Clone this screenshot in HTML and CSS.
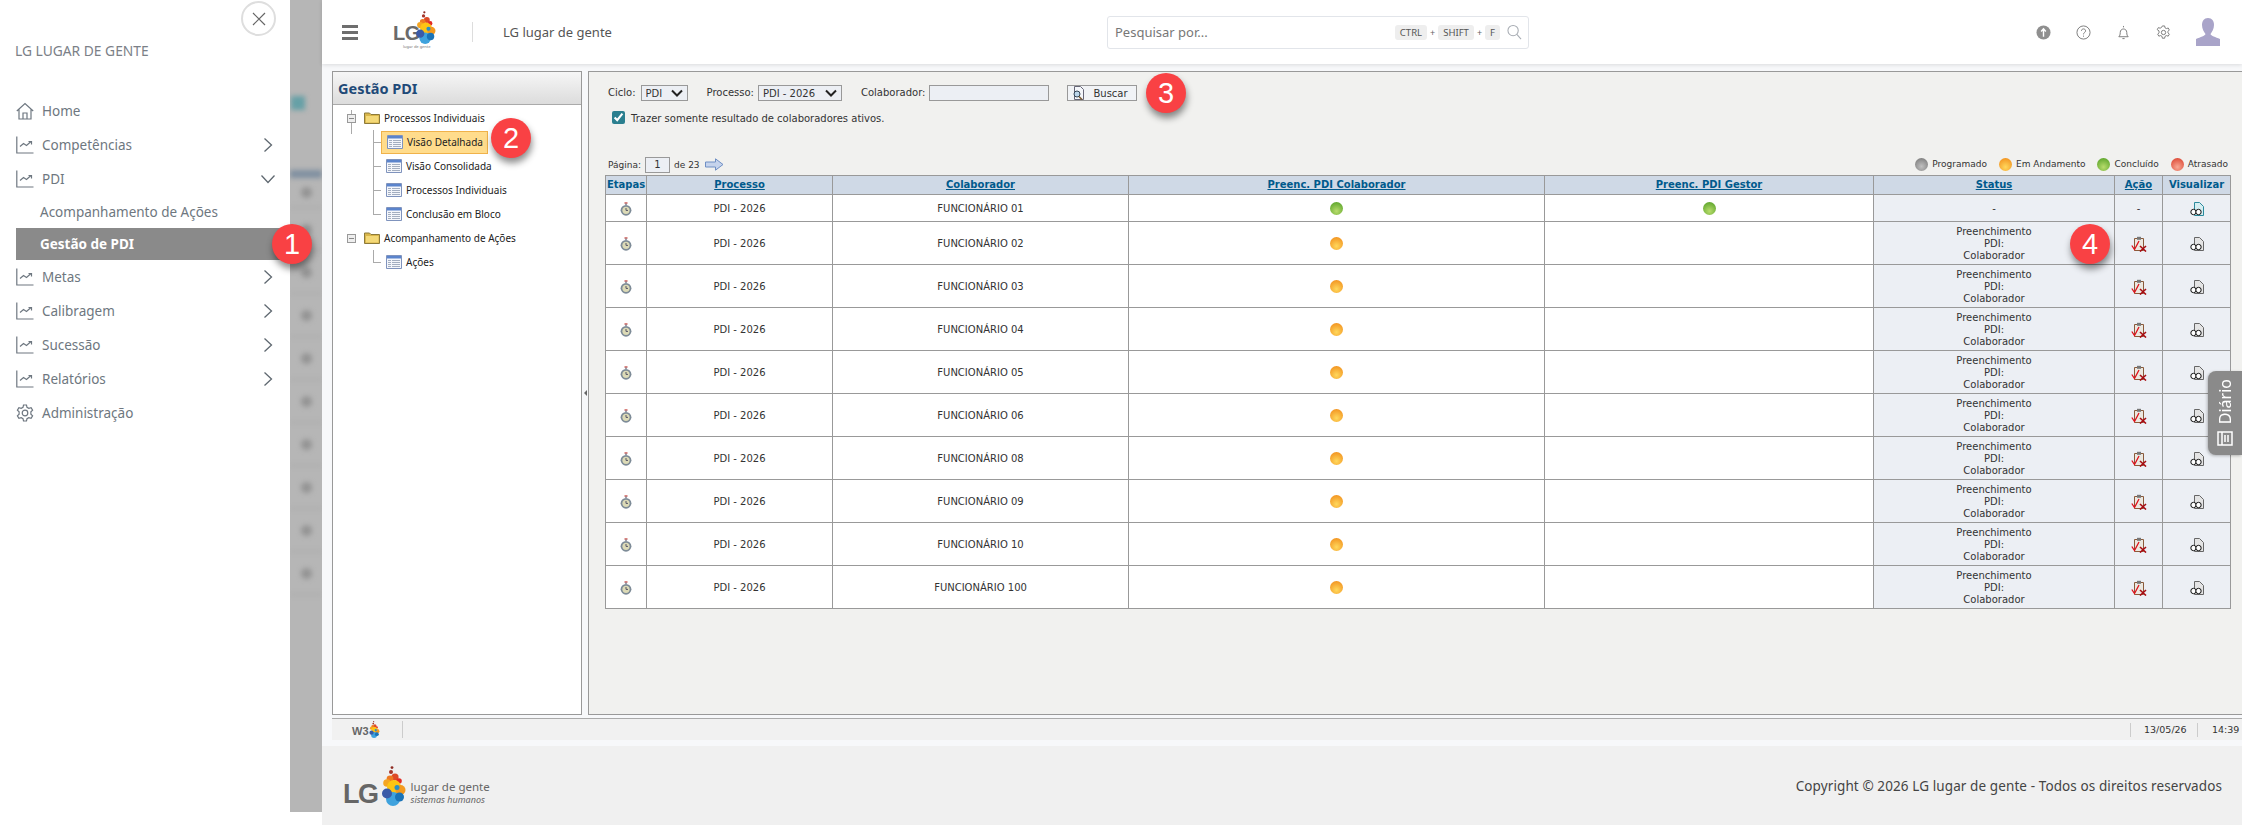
FILE: index.html
```html
<!DOCTYPE html>
<html lang="pt-BR">
<head>
  <meta charset="UTF-8">
  <title>LG lugar de gente - Gestão PDI</title>
  <link rel="stylesheet" href="styles.css">
</head>
<body>
  <!-- icones usados mais de uma vez -->
  <svg class="sprites" width="0" height="0">
    <symbol id="i-blob" viewBox="0 0 24 40">
      <circle cx="10" cy="1.6" r="1.4" fill="#8e2b22"/><circle cx="9" cy="6" r="2" fill="#a5352a"/>
      <circle cx="13" cy="11" r="3.6" fill="#dd4a28"/><circle cx="8" cy="13" r="3.4" fill="#ee7a22"/>
      <circle cx="17" cy="15" r="2.8" fill="#e22b25"/><circle cx="5" cy="17" r="3.8" fill="#f5a623"/>
      <circle cx="12" cy="21" r="7" fill="#fdc413"/><circle cx="18.500" cy="24" r="5" fill="#f39a1f"/>
      <circle cx="11" cy="33" r="7" fill="#3fa2dd"/><circle cx="5" cy="27.500" r="5" fill="#3b5ba8"/>
      <circle cx="17.500" cy="31" r="4.500" fill="#1a74b8"/><circle cx="15" cy="21.500" r="2.500" fill="#2a8fc4"/>
    </symbol>
    <symbol id="i-chart" viewBox="0 0 18 18">
      <path d="M.8 .5V17H17.500M4 10.500l3.500-3 3 2 4.500-4M12.500 5.500H15.500V8.500" fill="none" stroke="#6e7780" stroke-width="1.200"/>
    </symbol>
    <symbol id="i-next" viewBox="0 0 10 16">
      <path d="M1.500 1.500 8.500 8l-7 6.500" fill="none" stroke="#5f6870" stroke-width="1.300"/>
    </symbol>
    <symbol id="i-grid" viewBox="0 0 16 14">
      <path d="M.5 .5h15v13H.5z" fill="#f4f6fb" stroke="#7f93bd"/>
      <path d="M1 1h14v2.500H1z" fill="#5b84cc"/>
      <path d="M6 5.500h8M6 7.500h8M6 9.500h8M6 11.500h8M2 5.500h3M2 7.500h3M2 9.500h3M2 11.500h3" stroke="#a3aec0"/>
    </symbol>
    <symbol id="i-folder" viewBox="0 0 16 12">
      <path d="M.5 11.500V1h5l1.500 1.500h8.500v9z" fill="#d9b64a" stroke="#8c7a3a"/>
      <path d="M2 10.500V4h12.500v6.500z" fill="#f4d978"/>
    </symbol>
    <symbol id="i-clock" viewBox="0 0 12 14">
      <path d="M4.500 .3h3v1.400h-3z" fill="#c9504a"/>
      <path d="M5.300 1.500h1.400v1.500H5.300z" fill="#778"/>
      <circle cx="6" cy="8.300" r="5.400" fill="#7d8b97"/><circle cx="6" cy="8.300" r="3.600" fill="#dcdab6"/>
      <path d="M6 6v2.400h2" fill="none" stroke="#556" stroke-width="1"/>
    </symbol>
    <symbol id="i-view" viewBox="0 0 14 14">
      <path d="M4.500 .5h5l4 4v9h-9z" fill="#e4e4e4" stroke="#666"/>
      <circle cx="3.500" cy="10" r="2.700" fill="#fff" stroke="#111"/><circle cx="8.500" cy="10" r="2.700" fill="#fff" stroke="#111"/>
    </symbol>
    <symbol id="i-view-on" viewBox="0 0 14 14">
      <path d="M4.500 .5h5l4 4v9h-9z" fill="#d6eef2" stroke="#2b8a9c"/>
      <circle cx="3.500" cy="10" r="2.700" fill="#fff" stroke="#111"/><circle cx="8.500" cy="10" r="2.700" fill="#fff" stroke="#111"/>
    </symbol>
    <symbol id="i-task" viewBox="0 0 16 16">
      <path d="M3.500 2.500h9v12h-9z" fill="#ece8e0" stroke="#8a5a3a"/>
      <path d="M6 .8h4v3H6z" fill="#777"/>
      <path d="M.8 9.500 3.500 13.500 8 5" fill="none" stroke="#e0101a" stroke-width="1.300"/>
      <path d="M9 10l6 5.500M15 10l-6 5.500" stroke="#a80d12" stroke-width="1.600"/>
    </symbol>
  </svg>

  <div class="app">
    <aside class="sidebar">
      <div class="sidebar-top">
        <button class="close-btn">
          <svg width="14" height="14" viewBox="0 0 14 14"><path d="M1 1l12 12M13 1 1 13" stroke="#666" stroke-width="1.200"/></svg>
        </button>
        <div class="brand-name">LG LUGAR DE GENTE</div>
      </div>
      <nav class="nav">
        <a class="nav-item">
          <svg class="nav-icon" viewBox="0 0 18 18"><path d="M.8 9 9 1.500 17.200 9M3 7.500V17h12V7.500M7 17v-6h4v6" fill="none" stroke="#6e7780" stroke-width="1.200"/></svg>
          Home
        </a>
        <a class="nav-item"><svg class="nav-icon"><use href="#i-chart"/></svg>Competências<svg class="nav-arrow"><use href="#i-next"/></svg></a>
        <a class="nav-item">
          <svg class="nav-icon"><use href="#i-chart"/></svg>PDI
          <svg class="nav-arrow nav-arrow-open"><use href="#i-next"/></svg>
        </a>
        <a class="nav-sub">Acompanhamento de Ações</a>
        <a class="nav-sub nav-sub-active">Gestão de PDI<span class="badge badge-1">1</span></a>
        <a class="nav-item"><svg class="nav-icon"><use href="#i-chart"/></svg>Metas<svg class="nav-arrow"><use href="#i-next"/></svg></a>
        <a class="nav-item"><svg class="nav-icon"><use href="#i-chart"/></svg>Calibragem<svg class="nav-arrow"><use href="#i-next"/></svg></a>
        <a class="nav-item"><svg class="nav-icon"><use href="#i-chart"/></svg>Sucessão<svg class="nav-arrow"><use href="#i-next"/></svg></a>
        <a class="nav-item"><svg class="nav-icon"><use href="#i-chart"/></svg>Relatórios<svg class="nav-arrow"><use href="#i-next"/></svg></a>
        <a class="nav-item">
          <svg class="nav-icon" viewBox="0 0 18 18"><circle cx="9" cy="9" r="2.800" fill="none" stroke="#6e7780" stroke-width="1.200"/><path d="M7.500 1h3l.5 2.300 1.800 1 2.300-.7 1.500 2.600-1.700 1.600v2.400l1.700 1.600-1.500 2.600-2.300-.7-1.800 1-.5 2.300h-3L7 14.700l-1.800-1-2.300.7L1.400 11.800l1.700-1.600V7.800L1.400 6.200l1.500-2.600 2.300.7 1.800-1z" fill="none" stroke="#6e7780" stroke-width="1.200"/></svg>
          Administração
        </a>
      </nav>
    </aside>

    <!-- pagina borrada atras do menu -->
    <div class="backdrop">
      <div class="backdrop-inner">
        <div class="blur-check"></div>
        <div class="blur-head"></div>
        <div class="blur-row"><i></i></div>
        <div class="blur-row blur-tall"><i></i></div>
        <div class="blur-row blur-tall"><i></i></div>
        <div class="blur-row blur-tall"><i></i></div>
        <div class="blur-row blur-tall"><i></i></div>
        <div class="blur-row blur-tall"><i></i></div>
        <div class="blur-row blur-tall"><i></i></div>
        <div class="blur-row blur-tall"><i></i></div>
        <div class="blur-row blur-tall"><i></i></div>
        <div class="blur-row blur-tall"><i></i></div>
      </div>
    </div>

    <div class="main">
      <header class="topbar">
        <div class="burger"><span></span><span></span><span></span></div>
        <div class="top-logo">
          <span class="top-logo-lg">LG</span>
          <svg class="top-logo-blob"><use href="#i-blob"/></svg>
          <span class="top-logo-sub">lugar de gente</span>
        </div>
        <div class="top-sep"></div>
        <div class="top-title">LG lugar de gente</div>
        <div class="search">
          <input class="search-input" type="text" placeholder="Pesquisar por...">
          <kbd>CTRL</kbd><span class="plus">+</span><kbd>SHIFT</kbd><span class="plus">+</span><kbd>F</kbd>
          <svg class="search-icon" viewBox="0 0 16 16"><circle cx="6.500" cy="6.500" r="5.500" fill="none" stroke="#a6abb2" stroke-width="1.100"/><path d="M10.500 10.500 15 15.500" stroke="#a6abb2" stroke-width="1.100"/></svg>
        </div>
        <div class="top-icons">
          <svg viewBox="0 0 16 16"><circle cx="8" cy="8" r="7.500" fill="#8f8f8f"/><path d="M8 3.500v9M5.500 7 8 4l2.500 3" fill="none" stroke="#fff" stroke-width="1.500"/></svg>
          <svg viewBox="0 0 16 16"><circle cx="8" cy="8" r="7" fill="none" stroke="#777"/><path d="M5.800 6.200C5.800 3.500 10.200 3.500 10.200 6.200 10.200 8 8 8 8 10" fill="none" stroke="#777"/><path d="M8 11.300v1.200" stroke="#777"/></svg>
          <svg viewBox="0 0 16 16"><path d="M3 12.500c1-1 1.500-2 1.500-4.500 0-5 7-5 7 0 0 2.500.5 3.500 1.500 4.500zM8 1v1.500M6.800 14.500h2.400" fill="none" stroke="#777"/></svg>
          <svg viewBox="0 0 16 16"><circle cx="8" cy="8" r="2.300" fill="none" stroke="#777"/><path d="M6.800 1h2.400l.4 2 1.500.8 1.900-.6 1.200 2.100-1.400 1.400v1.700l1.400 1.400-1.200 2.100-1.900-.6-1.500.8-.4 2H6.800l-.4-2-1.500-.8-1.900.6-1.200-2.100 1.400-1.400V6.300L1.300 4.900l1.200-2.100 1.900.6 1.500-.8z" fill="none" stroke="#777"/></svg>
          <svg class="avatar" viewBox="0 0 24 28"><path d="M12 0c4 0 6 3 6 7 0 4-2 7-3.500 9 .5 2 5 3 9.500 5v7H0v-7c4.500-2 9-3 9.500-5C8 14 6 11 6 7c0-4 2-7 6-7z" fill="#a9a4c9"/></svg>
        </div>
      </header>

      <div class="content">
        <div class="panels">
          <section class="tree-panel">
            <h2 class="tree-title">Gestão PDI</h2>
            <ul class="tree">
              <li class="tree-node">
                <span class="tree-minus"></span><svg class="tree-folder"><use href="#i-folder"/></svg>Processos Individuais
              </li>
              <li class="tree-leaf tree-leaf-selected">
                <span class="leaf-box"><svg class="tree-grid"><use href="#i-grid"/></svg>Visão Detalhada<span class="badge badge-2">2</span></span>
              </li>
              <li class="tree-leaf"><svg class="tree-grid"><use href="#i-grid"/></svg>Visão Consolidada</li>
              <li class="tree-leaf"><svg class="tree-grid"><use href="#i-grid"/></svg>Processos Individuais</li>
              <li class="tree-leaf tree-leaf-last"><svg class="tree-grid"><use href="#i-grid"/></svg>Conclusão em Bloco</li>
              <li class="tree-node tree-node-last">
                <span class="tree-minus"></span><svg class="tree-folder"><use href="#i-folder"/></svg>Acompanhamento de Ações
              </li>
              <li class="tree-leaf tree-leaf-last"><svg class="tree-grid"><use href="#i-grid"/></svg>Ações</li>
            </ul>
          </section>

          <section class="work-panel">
            <span class="collapse-handle"></span>
            <div class="filters">
              <label class="flt-label">Ciclo:</label>
              <select class="flt-ciclo"><option>PDI</option></select>
              <label class="flt-label flt-gap">Processo:</label>
              <select class="flt-processo"><option>PDI - 2026</option></select>
              <label class="flt-label flt-gap">Colaborador:</label>
              <input class="flt-input" type="text">
              <button class="btn-buscar">
                <svg width="14" height="14" viewBox="0 0 14 14"><path d="M2.500 .5h6l3 3v10h-9z" fill="#f4f6fa" stroke="#667"/><circle cx="5" cy="8" r="3" fill="#bcd6ea" stroke="#345"/><path d="M7 10.500 10 13.500" stroke="#7a5a30" stroke-width="1.500"/></svg>
                Buscar
              </button>
              <span class="badge badge-3">3</span>
            </div>
            <label class="only-active"><input type="checkbox" checked><span>Trazer somente resultado de colaboradores ativos.</span></label>

            <div class="pager-row">
              <div class="pager">
                Página:<input class="pager-input" type="text" value="1">de 23
                <svg width="19" height="13" viewBox="0 0 19 13"><path d="M.5 4h10V.8L18 6.500 10.500 12.200V9H.5z" fill="#c5d3ec" stroke="#6f8fc4"/></svg>
              </div>
              <div class="legend">
                <span class="legend-item"><i class="dot dot-gray"></i>Programado</span>
                <span class="legend-item"><i class="dot dot-orange"></i>Em Andamento</span>
                <span class="legend-item"><i class="dot dot-green"></i>Concluído</span>
                <span class="legend-item"><i class="dot dot-red"></i>Atrasado</span>
              </div>
            </div>

            <table class="grid">
              <colgroup>
                <col class="c-etapas"><col class="c-processo"><col class="c-colab"><col class="c-pcolab">
                <col class="c-pgestor"><col class="c-status"><col class="c-acao"><col class="c-visu">
              </colgroup>
              <thead>
                <tr>
                  <th>Etapas</th><th><a>Processo</a></th><th><a>Colaborador</a></th><th><a>Preenc. PDI Colaborador</a></th>
                  <th><a>Preenc. PDI Gestor</a></th><th><a>Status</a></th><th><a>Ação</a></th><th>Visualizar</th>
                </tr>
              </thead>
              <tbody>
                <tr class="row-short">
                  <td><svg class="ic-clock"><use href="#i-clock"/></svg></td><td>PDI - 2026</td><td>FUNCIONÁRIO 01</td>
                  <td><i class="dot dot-green"></i></td><td><i class="dot dot-green"></i></td>
                  <td class="shade">-</td><td class="shade">-</td><td class="shade"><svg class="ic-doc"><use href="#i-view-on"/></svg></td>
                </tr>
                <tr>
                  <td><svg class="ic-clock"><use href="#i-clock"/></svg></td><td>PDI - 2026</td><td>FUNCIONÁRIO 02</td>
                  <td><i class="dot dot-orange"></i></td><td></td>
                  <td class="shade status-cell">Preenchimento<br>PDI:<br>Colaborador<span class="badge badge-4">4</span></td>
                  <td class="shade"><svg class="ic-task"><use href="#i-task"/></svg></td><td class="shade"><svg class="ic-doc"><use href="#i-view"/></svg></td>
                </tr>
                <tr>
                  <td><svg class="ic-clock"><use href="#i-clock"/></svg></td><td>PDI - 2026</td><td>FUNCIONÁRIO 03</td>
                  <td><i class="dot dot-orange"></i></td><td></td><td class="shade">Preenchimento<br>PDI:<br>Colaborador</td>
                  <td class="shade"><svg class="ic-task"><use href="#i-task"/></svg></td><td class="shade"><svg class="ic-doc"><use href="#i-view"/></svg></td>
                </tr>
                <tr>
                  <td><svg class="ic-clock"><use href="#i-clock"/></svg></td><td>PDI - 2026</td><td>FUNCIONÁRIO 04</td>
                  <td><i class="dot dot-orange"></i></td><td></td><td class="shade">Preenchimento<br>PDI:<br>Colaborador</td>
                  <td class="shade"><svg class="ic-task"><use href="#i-task"/></svg></td><td class="shade"><svg class="ic-doc"><use href="#i-view"/></svg></td>
                </tr>
                <tr>
                  <td><svg class="ic-clock"><use href="#i-clock"/></svg></td><td>PDI - 2026</td><td>FUNCIONÁRIO 05</td>
                  <td><i class="dot dot-orange"></i></td><td></td><td class="shade">Preenchimento<br>PDI:<br>Colaborador</td>
                  <td class="shade"><svg class="ic-task"><use href="#i-task"/></svg></td><td class="shade"><svg class="ic-doc"><use href="#i-view"/></svg></td>
                </tr>
                <tr>
                  <td><svg class="ic-clock"><use href="#i-clock"/></svg></td><td>PDI - 2026</td><td>FUNCIONÁRIO 06</td>
                  <td><i class="dot dot-orange"></i></td><td></td><td class="shade">Preenchimento<br>PDI:<br>Colaborador</td>
                  <td class="shade"><svg class="ic-task"><use href="#i-task"/></svg></td><td class="shade"><svg class="ic-doc"><use href="#i-view"/></svg></td>
                </tr>
                <tr>
                  <td><svg class="ic-clock"><use href="#i-clock"/></svg></td><td>PDI - 2026</td><td>FUNCIONÁRIO 08</td>
                  <td><i class="dot dot-orange"></i></td><td></td><td class="shade">Preenchimento<br>PDI:<br>Colaborador</td>
                  <td class="shade"><svg class="ic-task"><use href="#i-task"/></svg></td><td class="shade"><svg class="ic-doc"><use href="#i-view"/></svg></td>
                </tr>
                <tr>
                  <td><svg class="ic-clock"><use href="#i-clock"/></svg></td><td>PDI - 2026</td><td>FUNCIONÁRIO 09</td>
                  <td><i class="dot dot-orange"></i></td><td></td><td class="shade">Preenchimento<br>PDI:<br>Colaborador</td>
                  <td class="shade"><svg class="ic-task"><use href="#i-task"/></svg></td><td class="shade"><svg class="ic-doc"><use href="#i-view"/></svg></td>
                </tr>
                <tr>
                  <td><svg class="ic-clock"><use href="#i-clock"/></svg></td><td>PDI - 2026</td><td>FUNCIONÁRIO 10</td>
                  <td><i class="dot dot-orange"></i></td><td></td><td class="shade">Preenchimento<br>PDI:<br>Colaborador</td>
                  <td class="shade"><svg class="ic-task"><use href="#i-task"/></svg></td><td class="shade"><svg class="ic-doc"><use href="#i-view"/></svg></td>
                </tr>
                <tr>
                  <td><svg class="ic-clock"><use href="#i-clock"/></svg></td><td>PDI - 2026</td><td>FUNCIONÁRIO 100</td>
                  <td><i class="dot dot-orange"></i></td><td></td><td class="shade">Preenchimento<br>PDI:<br>Colaborador</td>
                  <td class="shade"><svg class="ic-task"><use href="#i-task"/></svg></td><td class="shade"><svg class="ic-doc"><use href="#i-view"/></svg></td>
                </tr>
              </tbody>
            </table>
          </section>
        </div>

        <div class="statusbar">
          <div class="w3-logo"><span>W3</span><svg><use href="#i-blob"/></svg></div>
          <div class="status-date">13/05/26</div>
          <div class="status-time">14:39</div>
        </div>
      </div>

      <footer class="footer">
        <div class="foot-logo">
          <span class="foot-lg">LG</span>
          <svg class="foot-blob"><use href="#i-blob"/></svg>
          <div class="foot-text"><span>lugar de gente</span><em>sistemas humanos</em></div>
        </div>
        <div class="copyright">Copyright © 2026 LG lugar de gente - Todos os direitos reservados</div>
      </footer>
    </div>

    <div class="diario">
      <span>Diário</span>
      <svg width="16" height="15" viewBox="0 0 16 15"><path d="M1 1h14v13H1zM5 1v13M8 4v7M11 4v7" fill="none" stroke="#fff" stroke-width="1.500"/></svg>
    </div>
  </div>
</body>
</html>
```

FILE: styles.css
```css
* {
  box-sizing: border-box;
}
body {
  margin: 0;
  background: #fff;
  font-family: "Noto Sans", sans-serif;
  color: #333;
  overflow: hidden;
}
.sprites {
  position: absolute;
}
.app {
  position: relative;
  display: flex;
  width: 2242px;
  height: 825px;
  overflow: hidden;
}

/* badges vermelhos numerados */
.badge {
  position: absolute;
  z-index: 5;
  width: 40px;
  height: 40px;
  border-radius: 50%;
  background: #f94144;
  color: #fff;
  font: 29px/40px "Liberation Sans", sans-serif;
  text-align: center;
  box-shadow: 1px 5px 7px rgba(0, 0, 0, 0.45);
}
.badge-1 { top: -4px; right: -22px; }
.badge-2 { top: -14px; left: 109px; }
.badge-3 { top: -12px; left: 541px; }
.badge-4 { top: 2px; right: 4px; }

/* menu lateral */
.sidebar {
  position: relative;
  z-index: 3;
  flex: 0 0 290px;
  background: #fff;
}
.sidebar-top {
  position: relative;
  height: 94px;
  padding: 41px 0 0 15px;
}
.close-btn {
  position: absolute;
  top: 1px;
  left: 241px;
  width: 35px;
  height: 35px;
  padding: 0;
  display: flex;
  align-items: center;
  justify-content: center;
  background: #fff;
  border: 2px solid #dedede;
  border-radius: 50%;
}
.brand-name {
  font-size: 13.8px;
  line-height: 20px;
  color: #7b8087;
}
.nav-item, .nav-sub {
  position: relative;
  display: flex;
  align-items: center;
  margin-left: 16px;
  font-size: 13.5px;
  color: #6e7780;
}
.nav-item {
  height: 34px;
}
.nav-icon {
  width: 18px;
  height: 18px;
  margin-right: 8px;
}
.nav-arrow {
  position: absolute;
  left: 247px;
  width: 10px;
  height: 16px;
}
.nav-arrow-open {
  transform: rotate(90deg);
}
.nav-sub {
  height: 32px;
  padding-left: 24px;
}
.nav-sub-active {
  background: #8a8a8a;
  color: #fff;
  font-weight: 700;
}

/* faixa borrada */
.backdrop {
  flex: 0 0 32px;
  height: 812px;
  background: #b6b6b6;
  overflow: hidden;
}
.backdrop-inner {
  padding-top: 96px;
  filter: blur(2.5px);
}
.blur-check {
  width: 14px;
  height: 14px;
  margin: 0 0 60px 1px;
  background: #66a0a6;
}
.blur-head {
  height: 8px;
  background: #7f8fa0;
}
.blur-row {
  display: flex;
  justify-content: center;
  align-items: center;
  height: 30px;
  border-bottom: 1px solid #a4a4a4;
}
.blur-tall {
  height: 43px;
}
.blur-row i {
  width: 11px;
  height: 11px;
  border-radius: 50%;
  background: #949494;
}

/* area principal */
.main {
  flex: 1;
  display: flex;
  flex-direction: column;
  min-width: 0;
}
.topbar {
  position: relative;
  z-index: 1;
  flex: 0 0 64px;
  display: flex;
  align-items: center;
  background: #fff;
  box-shadow: 0 1px 4px rgba(0, 0, 0, 0.12);
}
.burger {
  display: flex;
  flex-direction: column;
  gap: 3px;
  width: 16px;
  margin-left: 20px;
}
.burger span {
  height: 3px;
  background: #6e6e6e;
}
.top-logo {
  position: relative;
  width: 46px;
  height: 40px;
  margin-left: 35px;
}
.top-logo-lg {
  position: absolute;
  left: 0;
  top: 9px;
  font: 700 20px/24px "Liberation Sans", sans-serif;
  letter-spacing: -0.5px;
  color: #6a6a6a;
}
.top-logo-blob {
  position: absolute;
  left: 23px;
  top: -1px;
  width: 20px;
  height: 33px;
}
.top-logo-sub {
  position: absolute;
  left: 10px;
  top: 32px;
  font-size: 4px;
  line-height: 5px;
  color: #777;
  white-space: nowrap;
}
.top-sep {
  width: 1px;
  height: 20px;
  margin-left: 33px;
  background: #ddd;
}
.top-title {
  width: 604px;
  margin-left: 30px;
  font-size: 13px;
  color: #555;
}
.search {
  display: flex;
  align-items: center;
  width: 422px;
  height: 33px;
  padding: 0 6px 0 7px;
  border: 1px solid #e2e5ea;
  border-radius: 3px;
}
.search-input {
  flex: 1;
  min-width: 0;
  border: 0;
  outline: 0;
  padding: 0;
  font: 13px "Noto Sans", sans-serif;
}
.search-input::placeholder {
  color: #777;
}
.search kbd {
  padding: 0 5px;
  height: 15px;
  border-radius: 3px;
  background: #eee;
  font: 9.5px/15px "Noto Sans", sans-serif;
  color: #555;
}
.plus {
  margin: 0 3px;
  font-size: 9px;
  color: #666;
}
.search-icon {
  width: 15px;
  height: 16px;
  margin-left: 7px;
}
.top-icons {
  display: flex;
  align-items: center;
  gap: 25px;
  margin-left: 507px;
}
.top-icons svg {
  width: 15px;
  height: 15px;
}
.top-icons .avatar {
  width: 24px;
  height: 28px;
}

.content {
  flex: 1;
  display: flex;
  flex-direction: column;
  min-height: 0;
  padding: 7px 0 6px 10px;
  background: #f7f8fa;
}
.panels {
  flex: 1;
  display: flex;
  gap: 6px;
  min-height: 0;
}

/* painel da arvore */
.tree-panel {
  flex: 0 0 250px;
  background: #fff;
  border: 1px solid #999;
}
.tree-title {
  height: 33px;
  margin: 0;
  padding-left: 5px;
  background: linear-gradient(#f6f6f6, #dcdcdc);
  border-bottom: 1px solid #aaa;
  font-size: 14.5px;
  line-height: 33px;
  font-weight: 700;
  color: #1f4a78;
}
.tree {
  position: relative;
  list-style: none;
  margin: 0;
  padding: 1px 0 0;
  font-size: 10px;
  color: #222;
}
.tree-node, .tree-leaf {
  position: relative;
  display: flex;
  align-items: center;
  height: 24px;
  white-space: nowrap;
}
.tree-node {
  padding-left: 31px;
}
.tree-node::before { /* linha vertical do no */
  content: "";
  position: absolute;
  left: 18px;
  top: 4px;
  height: 24px;
  border-left: 1px solid #aaa;
}
.tree-node-last::before {
  display: none;
}
.tree-leaf {
  padding-left: 53px;
}
.tree-leaf::before { /* linha vertical do filho */
  content: "";
  position: absolute;
  left: 40px;
  top: 0;
  height: 24px;
  border-left: 1px solid #aaa;
}
.tree-leaf::after { /* linha horizontal do filho */
  content: "";
  position: absolute;
  left: 40px;
  top: 12px;
  width: 8px;
  border-top: 1px solid #aaa;
}
.tree-leaf-last::before {
  height: 13px;
}
.tree-leaf-selected {
  padding-left: 48px;
}
.tree-minus {
  position: absolute;
  left: 14px;
  top: 8px;
  z-index: 1;
  width: 9px;
  height: 9px;
  background: linear-gradient(#888, #888) center / 5px 1px no-repeat #eee;
  border: 1px solid #999;
}
.tree-folder {
  width: 16px;
  height: 12px;
  margin-right: 4px;
}
.tree-grid {
  width: 16px;
  height: 14px;
  margin-right: 4px;
}
.leaf-box {
  position: relative;
  z-index: 1;
  display: flex;
  align-items: center;
  width: 107px;
  height: 23px;
  padding-left: 5px;
  background: #ffdc8c;
  border: 1px solid #f0b24a;
}

/* painel de trabalho */
.work-panel {
  position: relative;
  flex: 1;
  min-width: 0;
  padding: 13px 0 0 16px;
  background: #f1f1ef;
  border: 1px solid #999;
  border-right: 0;
  font: 10px/12px "DejaVu Sans", Verdana, sans-serif;
  color: #333;
}
.collapse-handle {
  position: absolute;
  left: -5px;
  top: 318px;
  border: 3px solid transparent;
  border-right: 3px solid #666;
  border-left: 0;
}
.filters {
  position: relative;
  display: flex;
  align-items: center;
  height: 16px;
  padding-left: 3px;
}
.filters select, .flt-input, .pager-input {
  height: 16px;
  padding: 0 0 0 4px;
  background-color: #eceff4;
  border: 1px solid #999;
  border-radius: 0;
  font: 10px "DejaVu Sans", Verdana, sans-serif;
  color: #333;
}
.filters select { /* seta mais grossa como no sistema */
  appearance: none;
  background-image: url("data:image/svg+xml,%3Csvg xmlns='http://www.w3.org/2000/svg' width='12' height='8'%3E%3Cpath d='M1 1.500 6 6.500 11 1.500' fill='none' stroke='%23222' stroke-width='2'/%3E%3C/svg%3E");
  background-repeat: no-repeat;
  background-position: right 4px center;
}
.flt-label {
  margin-right: 4px;
}
.flt-gap {
  margin-left: 19px;
}
.flt-ciclo {
  width: 47px;
  margin-left: 1px;
}
.flt-processo {
  width: 84px;
}
.flt-input {
  width: 120px;
}
.btn-buscar {
  display: flex;
  align-items: center;
  gap: 7px;
  width: 70px;
  height: 16px;
  margin-left: 18px;
  padding: 0 0 0 4px;
  background: #f1f3f6;
  border: 1px solid #999;
  font: 10px "DejaVu Sans", Verdana, sans-serif;
  color: #333;
}
.only-active {
  display: flex;
  align-items: center;
  margin: 9px 0 0 7px;
  height: 15px;
}
.only-active input {
  width: 13px;
  height: 13px;
  margin: 0 6px 0 0;
  accent-color: #2b7f8f;
}
.only-active span {
  padding-top: 3px;
}
.pager-row {
  display: flex;
  align-items: center;
  justify-content: space-between;
  width: 1625px;
  height: 16px;
  margin-top: 31px;
  padding-left: 3px;
}
.pager {
  display: flex;
  align-items: center;
  font-size: 9px;
  padding-top: 1px;
}
.pager-input {
  width: 25px;
  margin: 0 4px;
  padding: 0;
  text-align: center;
}
.pager svg {
  margin-left: 5px;
}
.legend {
  display: flex;
  gap: 12px;
  padding-right: 2px;
  font-size: 9px;
}
.legend-item {
  display: flex;
  align-items: center;
  gap: 4px;
}
.dot {
  display: inline-block;
  width: 13px;
  height: 13px;
  border-radius: 50%;
  vertical-align: middle;
}
.dot-gray { background: radial-gradient(circle at 50% 65%, #c0c0c0, #7d7d7d 85%); }
.dot-orange { background: radial-gradient(circle at 50% 70%, #ffd85c, #f2921f 85%); }
.dot-green { background: radial-gradient(circle at 50% 70%, #b8dc6c, #5da52c 85%); }
.dot-red { background: radial-gradient(circle at 50% 70%, #f8a894, #dd4a36 85%); }

/* tabela */
.grid {
  width: 1625px;
  margin-top: 3px;
  table-layout: fixed;
  border-collapse: collapse;
  background: #fff;
  text-align: center;
}
.c-etapas { width: 41px; }
.c-processo { width: 186px; }
.c-colab { width: 296px; }
.c-pcolab { width: 416px; }
.c-pgestor { width: 329px; }
.c-status { width: 241px; }
.c-acao { width: 48px; }
.c-visu { width: 68px; }
.grid th, .grid td {
  padding: 0;
  border: 1px solid #999;
}
.grid th {
  height: 19px;
  background: #cfd9e6;
  font-weight: 700;
  color: #005a8c;
  white-space: nowrap;
}
.grid th a {
  text-decoration: underline;
}
.grid td {
  height: 43px;
  padding-top: 1px;
  color: #333;
}
.grid .row-short td {
  height: 27px;
}
.grid td.shade {
  background: #eceff4;
}
.status-cell {
  position: relative;
}
.grid td svg {
  display: block;
  margin: 0 auto;
}
.ic-clock {
  width: 12px;
  height: 14px;
}
.ic-doc {
  width: 14px;
  height: 14px;
}
.ic-task {
  width: 16px;
  height: 16px;
}

/* barra de status */
.statusbar {
  flex: 0 0 22px;
  display: flex;
  align-items: center;
  margin-top: 3px;
  background: #f1f1f1;
  border-top: 1px solid #aaa;
  font: 9.5px "DejaVu Sans", Verdana, sans-serif;
  color: #333;
}
.w3-logo {
  display: flex;
  align-items: flex-end;
  width: 71px;
  height: 17px;
  padding-left: 20px;
  border-right: 1px solid #ccc;
  font: 700 11px/13px "Liberation Sans", sans-serif;
  color: #666;
}
.w3-logo svg {
  width: 11px;
  height: 17px;
}
.status-date {
  margin-left: auto;
  width: 67px;
  height: 14px;
  padding-left: 13px;
  line-height: 14px;
  border-left: 1px solid #ccc;
}
.status-time {
  width: 45px;
  height: 14px;
  padding-left: 14px;
  line-height: 14px;
  border-left: 1px solid #ccc;
}

/* rodape */
.footer {
  flex: 0 0 79px;
  display: flex;
  align-items: center;
  justify-content: space-between;
  padding: 0 20px 0 21px;
  background: #f0f0f0;
}
.foot-logo {
  display: flex;
  align-items: flex-end;
}
.foot-lg {
  font: 700 27px/24px "Liberation Sans", sans-serif;
  letter-spacing: -1.5px;
  color: #666;
}
.foot-blob {
  width: 24px;
  height: 40px;
  margin-left: 4px;
}
.foot-text {
  display: flex;
  flex-direction: column;
  margin: 0 0 1px 5px;
  font-size: 11.5px;
  line-height: 14px;
  color: #666;
}
.foot-text em {
  font-size: 9px;
  line-height: 11px;
}
.copyright {
  font-size: 13.5px;
  letter-spacing: 0.1px;
  color: #444;
}

/* aba diario */
.diario {
  position: absolute;
  top: 371px;
  right: 0;
  z-index: 4;
  display: flex;
  flex-direction: column;
  align-items: center;
  gap: 7px;
  width: 34px;
  height: 84px;
  padding-top: 8px;
  background: #8a8a8a;
  border-radius: 8px 0 0 8px;
  box-shadow: -1px 1px 3px rgba(0, 0, 0, 0.25);
  color: #fff;
  font-size: 16px;
}
.diario span {
  writing-mode: vertical-rl;
  transform: rotate(180deg);
}
```
